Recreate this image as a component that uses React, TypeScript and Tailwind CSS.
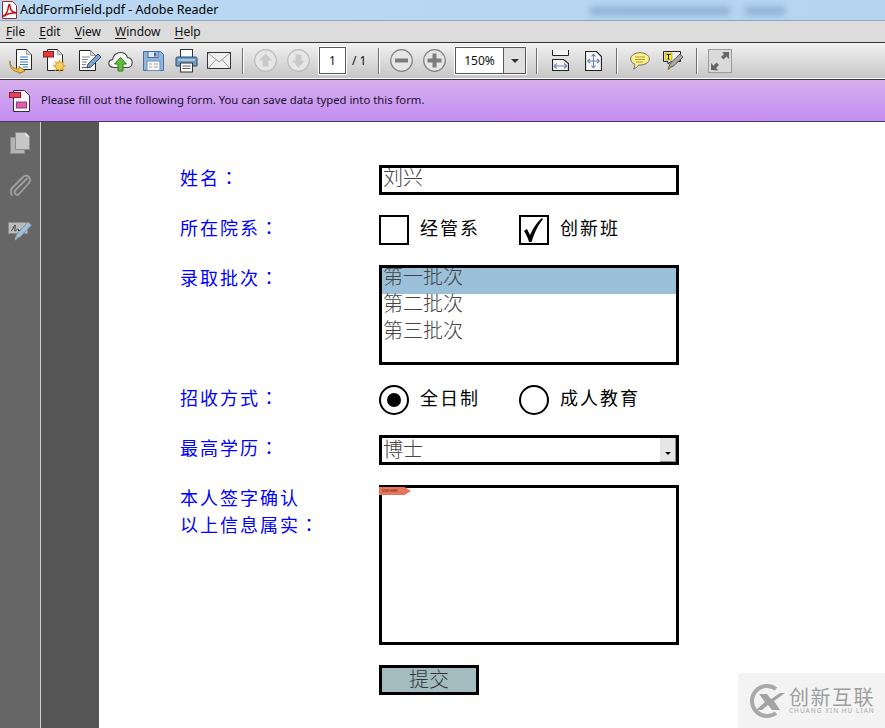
const cjk = { fontFamily: '"Noto Sans CJK SC", sans-serif' };
const ui = { fontFamily: '"Noto Sans", sans-serif' };

function Doc({ x = 6, y = 1, w = 16, h = 21 }: { x?: number; y?: number; w?: number; h?: number }) {
  const r = x + w;
  const b = y + h;
  return (
    <>
      <path d={`M${x} ${y}H${r - 5}L${r} ${y + 5}V${b}H${x}Z`} fill="#fdfdfd" stroke="#222" strokeWidth="1" />
      <path d={`M${r - 5} ${y}V${y + 5}H${r}Z`} fill="#d8d8d8" stroke="#777" strokeWidth=".6" />
    </>
  );
}

function OpenIcon() {
  return (
    <svg width="24" height="26" viewBox="0 0 24 26">
      <Doc x={7.5} y={1.5} w={15} h={20} />
      <path d="M11 9h8M11 11.5h8M11 14h8M11 16.500h8M14 19h5" stroke="#2f7fd8" strokeWidth="1.200" />
      <path d="M1 13c0 6 4 8 9 8v-3l6 5-6 2.500V24C5 24 0 20 1 13Z" fill="#f3c14e" stroke="#a9782a" strokeWidth="1" />
    </svg>
  );
}

function CreateIcon() {
  return (
    <svg width="24" height="26" viewBox="0 0 24 26">
      <Doc x={4.500} y={1.500} w={15} h={21} />
      <rect x=".5" y="3.500" width="10" height="5.500" fill="#e23b3b" stroke="#8c1f1f" />
      <path d="M16.500 11.500v13M10 18h13M12 13.500l9 9M21 13.500l-9 9" stroke="#e8aa2f" strokeWidth="1.500" />
      <circle cx="16.500" cy="18" r="4" fill="#f8cf63" stroke="#d59a2c" />
    </svg>
  );
}

function EditIcon() {
  return (
    <svg width="24" height="24" viewBox="0 0 24 24">
      <Doc x={1.500} y={1.500} w={16} h={20} />
      <path d="M4 8h8M4 10.500h6M4 13h5M4 15.500h4" stroke="#888" strokeWidth="1" />
      <path d="M9 19l1-4L20 5l3 3-10 10Z" fill="#7ea4cf" stroke="#33475f" strokeWidth="1" />
      <path d="M4 19c2-2 3 1 5-1" stroke="#333" fill="none" />
    </svg>
  );
}

function CloudIcon() {
  return (
    <svg width="25" height="24" viewBox="0 0 25 24">
      <path d="M6 18.500C2.500 18.500.8 16.500.8 14.500c0-2.200 1.700-3.700 3.700-3.900C5 6.500 8.500 3.500 12.500 3.500c3.500 0 6 2 7 5 2.800.3 4.700 2.500 4.700 5.200 0 2.700-2 4.800-5 4.800Z" fill="#f5f5f5" stroke="#444" strokeWidth="1.100" />
      <path d="M12.500 8.500l6 6.500h-3.500v7H10v-7H6.500Z" fill="#63bd3f" stroke="#2f7d1f" strokeWidth="1" />
    </svg>
  );
}

function SaveIcon() {
  return (
    <svg width="21" height="22" viewBox="0 0 21 22">
      <path d="M.5 1.500h17l3 3v16H.5Z" fill="#8fb4de" stroke="#4a6d96" />
      <rect x="5" y="1.500" width="10" height="6" fill="#dfe9f5" stroke="#4a6d96" />
      <rect x="11" y="2.500" width="2.500" height="4" fill="#4a6d96" />
      <rect x="4" y="11" width="13" height="9.500" fill="#f5f5f5" stroke="#6f8fb5" />
      <path d="M6 14h3M11 14h4M6 17h3M11 17h4" stroke="#a9a9a9" />
    </svg>
  );
}

function PrintIcon() {
  return (
    <svg width="23" height="24" viewBox="0 0 23 24">
      <rect x="5.500" y=".5" width="12" height="8" fill="#fafafa" stroke="#333" />
      <path d="M1 9.500c0-1 .7-1.500 1.500-1.500h18c.8 0 1.500.5 1.500 1.500V17H1Z" fill="#6f9cc7" stroke="#2b4a6b" />
      <rect x="3" y="10" width="17" height="2" fill="#a6c6e3" />
      <rect x="5.500" y="14" width="12" height="9" fill="#fafafa" stroke="#333" />
      <path d="M7.500 17h8M7.500 19.500h8" stroke="#666" />
    </svg>
  );
}

function MailIcon() {
  return (
    <svg width="24" height="18" viewBox="0 0 24 18">
      <rect x=".5" y=".5" width="23" height="16" fill="#f0f0f0" stroke="#333" />
      <path d="M1 1l11 9 11-9M1 16.500l8-9M23 16.500l-8-9" fill="none" stroke="#9a9a9a" />
    </svg>
  );
}

function RoundButton({ kind }: { kind: "up" | "down" | "minus" | "plus" }) {
  const color = kind === "up" || kind === "down" ? "#c9c9c9" : "#7c7c7c";
  const edge = kind === "up" || kind === "down" ? "#bcbcbc" : "#808080";
  const shape = {
    up: "M11.500 4.500l6.500 7h-3.500v6h-6v-6H5Z",
    down: "M11.500 18.500l6.500-7h-3.500v-6h-6v6H5Z",
    minus: "M5 9.500h13v4H5Z",
    plus: "M9.500 4.500h4v5h5v4h-5v5h-4v-5h-5v-4h5Z",
  }[kind];
  return (
    <svg width="23" height="23" viewBox="0 0 23 23">
      <circle cx="11.500" cy="11.500" r="10.800" fill="#e6e6e6" stroke={edge} strokeWidth="1.200" />
      <path d={shape} fill={color} />
    </svg>
  );
}

function FitWidthIcon() {
  return (
    <svg width="17" height="21" viewBox="0 0 17 21">
      <path d="M.5 0v5.500h16V0" fill="#f5f5f5" stroke="#222" />
      <path d="M.5 9.500h11l5 4v7H.5Z" fill="#f5f5f5" stroke="#222" strokeWidth="1.200" />
      <path d="M2 16h13M2 16l3-2.500M2 16l3 2.500M15 16l-3-2.500M15 16l-3 2.500" stroke="#6f86b8" strokeWidth="1.100" fill="none" />
    </svg>
  );
}

function FitPageIcon() {
  return (
    <svg width="17" height="20" viewBox="0 0 17 20">
      <path d="M.5.500h11l5 5v14H.5Z" fill="#f5f5f5" stroke="#222" strokeWidth="1.200" />
      <path d="M8.500 3v14M2.500 10h12M8.500 3L6.500 5.500M8.500 3l2 2.500M8.500 17l-2-2.500M8.500 17l2-2.500M2.500 10L5 8M2.500 10L5 12M14.500 10L12 8M14.500 10L12 12" stroke="#6f86b8" strokeWidth="1.100" fill="none" />
    </svg>
  );
}

function CommentIcon() {
  return (
    <svg width="20" height="18" viewBox="0 0 20 18">
      <path d="M10 .7c5.200 0 9.300 2.600 9.300 6.200S15.200 13 10 13H8.500C7.500 15 5.500 16.500 3.500 17c1-1.200 1.300-2.600 1.300-4.600C2.300 11.300.7 9.400.7 6.900.7 3.300 4.800.7 10 .7Z" fill="#fbf08b" stroke="#6f6f6f" strokeWidth="1" />
      <path d="M5 5h10M5 7.500h10M6 10h7" stroke="#b89b3a" strokeWidth="1" />
    </svg>
  );
}

function HighlightIcon() {
  return (
    <svg width="21" height="20" viewBox="0 0 21 20">
      <path d="M.5.500h17v10H8L5 13V10.500H.5Z" fill="#f5f5f5" stroke="#222" />
      <rect x="2" y="2" width="7" height="7" fill="#ffee00" stroke="#777" strokeWidth=".5" />
      <path d="M3.500 3.500h4M5.500 3.500v4.500M4.500 8h2" stroke="#222" strokeWidth="1" />
      <path d="M5.500 17l2-5L17 3l3 3-9.500 9Z" fill="#a8a8a8" stroke="#555" />
      <path d="M5 18.500l2.500-1.500-1.500-1.500Z" fill="#e6c83c" stroke="#8a7a20" />
    </svg>
  );
}

function ExpandIcon() {
  return (
    <svg width="24" height="24" viewBox="0 0 24 24">
      <rect x=".5" y=".5" width="23" height="23" fill="#dadada" stroke="#9a9a9a" />
      <path d="M14 3h7v7l-2.500-2.500-3 3-2.500-2.500 3-3Z" fill="#666" />
      <path d="M3 21v-7l2.500 2.500 3-3 2.500 2.500-3 3 2.500 2.500Z" fill="#666" />
    </svg>
  );
}

function PdfMark() {
  return (
    <svg width="15" height="18" viewBox="0 0 15 18">
      <path d="M.5.500h10l4 4v13H.5Z" fill="#fff" stroke="#9a2a2a" />
      <path d="M1 15c3-1 5-5 5.500-10 .2-2 1.500-2 1.500 0 0 4 2 6 6 7-3-.3-7 .2-9.500 1.500C3.500 14.500 2 16 1 15Z" fill="none" stroke="#c8141b" strokeWidth="1.500" />
    </svg>
  );
}

function PagesIcon() {
  return (
    <svg width="20" height="22" viewBox="0 0 20 22">
      <rect x=".5" y="5.500" width="14" height="16" fill="#b4b4b4" stroke="#8c8c8c" />
      <path d="M5.500.500h10l4 4v13h-14Z" fill="#c6c6c6" stroke="#8c8c8c" />
      <path d="M15.500.500v4h4Z" fill="#e6e6e6" />
    </svg>
  );
}

function ClipIcon() {
  return (
    <svg width="21" height="24" viewBox="0 0 21 24">
      <path d="M17 4.500L5.500 16c-1.500 1.500-1 3 0 4s2.500 1 3.500 0L18.500 9.500c2.500-2.500 1.500-5 .5-6.500-1.500-1.500-4-2-6 0L3 13c-3 3-2.500 6-1 8" fill="none" stroke="#a0a0a0" strokeWidth="1.800" strokeLinecap="round" />
    </svg>
  );
}

function SignIcon() {
  return (
    <svg width="24" height="20" viewBox="0 0 24 20">
      <rect x=".5" y="1.500" width="19" height="11" fill="#bbb" stroke="#8c8c8c" />
      <path d="M3 10c2-1 3-6 4-6s-1 6 0 6 2-2 3-2 0 2 1 2 1-1 2-1" fill="none" stroke="#333" strokeWidth="1" />
      <path d="M7 18l2-5L20 1l3.500 3L12 16Z" fill="#9fc2dc" stroke="#7d8f9e" />
      <path d="M7 19.500l2-1.500-1.300-1.500Z" fill="#c8c8c8" />
    </svg>
  );
}

function CheckMark() {
  return (
    <svg width="26" height="26" viewBox="0 0 26 26">
      <path d="M3 14L6 12L9 18C12 11 16 5 21 1L22 2C17 8 13 17 10.500 25H8C7 21 5 17 3 14Z" fill="#000" />
    </svg>
  );
}

function Mnemonic({ k, rest }: { k: string; rest: string }) {
  return (
    <span>
      <span className="underline underline-offset-2">{k}</span>
      {rest}
    </span>
  );
}

function Sep() {
  return <div className="w-[1px] h-[26px] bg-[#6e6e6e] border-r border-white box-content shrink-0" />;
}

function Colon() {
  return <span className="leading-[0px]" style={{ fontFamily: '"Noto Sans CJK TC", sans-serif' }}>：</span>;
}

function Label({ children }: { children: React.ReactNode }) {
  return (
    <div className="w-[199px] shrink-0 -mt-[1px] text-[18px] leading-[27px] tracking-[2px] text-[#0000ff]" style={cjk}>
      {children}
    </div>
  );
}

function Row({ children }: { children: React.ReactNode }) {
  return <div className="flex">{children}</div>;
}

function ChoiceText({ children }: { children: React.ReactNode }) {
  return <div className="pb-[6px] text-[18px] leading-[27px] tracking-[2px] text-black" style={cjk}>{children}</div>;
}

function Logo() {
  return (
    <svg width="38" height="36" viewBox="0 0 38 36">
      <path d="M28 6A15 15 0 1 0 28 30" fill="none" stroke="#a9a9a9" strokeWidth="4" />
      <path d="M11 11h8l4 5 9-6h5L26 18l6 9h-8l-4-5-6 5H8l9-8Z" fill="#a3a3a3" />
    </svg>
  );
}

export default function App() {
  return (
    <div className="relative w-full h-screen overflow-hidden flex flex-col bg-white" style={ui}>
      <div className="relative h-[21px] shrink-0 flex items-center pl-[2px] gap-[3px] bg-gradient-to-r from-[#bad8f3] to-[#b4d4f2] border-b border-[#8fa9c4] text-[12.500px] text-black">
        <PdfMark />
        <span className="leading-none">AddFormField.pdf - Adobe Reader</span>
        <div className="absolute left-[590px] top-[7px] w-[140px] h-[8px] bg-[#8fb0d2] blur-[3px]" />
        <div className="absolute left-[745px] top-[7px] w-[40px] h-[8px] bg-[#8fb0d2] blur-[3px]" />
      </div>
      <div className="h-[21px] shrink-0 flex items-center pl-[6px] gap-[14px] bg-[#dcdcdc] text-[12px] text-[#111]">
        <Mnemonic k="F" rest="ile" />
        <Mnemonic k="E" rest="dit" />
        <Mnemonic k="V" rest="iew" />
        <Mnemonic k="W" rest="indow" />
        <Mnemonic k="H" rest="elp" />
      </div>
      <div className="h-[37px] shrink-0 flex items-center border-y-[1.500px] border-t-[#333] border-b-[#fff] bg-gradient-to-b from-[#f2f2f2] to-[#c6c6c6]">
        <div className="ml-[9px]"><OpenIcon /></div>
        <div className="ml-[10px]"><CreateIcon /></div>
        <div className="ml-[11px]"><EditIcon /></div>
        <div className="ml-[6px]"><CloudIcon /></div>
        <div className="ml-[10px]"><SaveIcon /></div>
        <div className="ml-[11px]"><PrintIcon /></div>
        <div className="ml-[9px]"><MailIcon /></div>
        <div className="ml-[11px]"><Sep /></div>
        <div className="ml-[10px]"><RoundButton kind="up" /></div>
        <div className="ml-[10px]"><RoundButton kind="down" /></div>
        <div className="ml-[9px] w-[27px] h-[27px] bg-white border border-[#555] outline outline-1 outline-white flex items-center justify-center text-[12px] text-[#111]">1</div>
        <div className="ml-[6px] w-[18px] text-[12px] text-[#111] whitespace-nowrap">/ 1</div>
        <div className="ml-[8px]"><Sep /></div>
        <div className="ml-[10px]"><RoundButton kind="minus" /></div>
        <div className="ml-[10px]"><RoundButton kind="plus" /></div>
        <div className="ml-[9px] w-[71px] h-[27px] flex bg-white border border-[#555] outline outline-1 outline-white text-[12px] text-[#111]">
          <div className="w-[48px] border-r border-[#555] flex items-center justify-center">150%</div>
          <div className="flex-1 bg-[#e0e0e0] flex items-center justify-center">
            <div className="w-0 h-0 border-x-[4px] border-x-transparent border-t-[4px] border-t-[#333]" />
          </div>
        </div>
        <div className="ml-[10px]"><Sep /></div>
        <div className="ml-[14px]"><FitWidthIcon /></div>
        <div className="ml-[16px]"><FitPageIcon /></div>
        <div className="ml-[14px]"><Sep /></div>
        <div className="ml-[12px]"><CommentIcon /></div>
        <div className="ml-[13px]"><HighlightIcon /></div>
        <div className="ml-[12px]"><Sep /></div>
        <div className="ml-[10px]"><ExpandIcon /></div>
      </div>
      <div className="h-[43px] shrink-0 flex items-center pl-[9px] gap-[9px] border-y border-t-[#3c3250] border-b-[#4a3a66] bg-gradient-to-b from-[#d6aeea] to-[#c48ef3] text-[11.300px] text-[#1a1030]">
        <svg width="23" height="24" viewBox="0 0 23 24">
          <path d="M4.500 1.500h11l5 5v16h-16Z" fill="#fdf4fa" stroke="#3a2a40" />
          <rect x=".5" y="3.500" width="11" height="5" fill="#e8435a" stroke="#8a1f30" />
          <rect x="7.500" y="13" width="10" height="6" fill="#d760a8" stroke="#93407a" />
        </svg>
        <span>Please fill out the following form. You can save data typed into this form.</span>
      </div>
      <div className="flex-1 flex min-h-0">
        <div className="w-[40px] shrink-0 bg-[#666666] flex flex-col items-center pt-[10px] gap-[20px]">
          <PagesIcon />
          <ClipIcon />
          <div className="mt-[3px]"><SignIcon /></div>
        </div>
        <div className="w-[1px] shrink-0 bg-[#d0d0d0]" />
        <div className="w-[58px] shrink-0 bg-[#555555]" />
        <div className="flex-1 min-w-0 pl-[81px] pt-[43px] flex flex-col gap-[20px]">
          <Row>
            <Label>姓名<Colon /></Label>
            <div className="w-[300px] h-[30px] border-[3px] border-black pl-[1px] text-[20px] leading-[18px] text-[#444] font-light" style={cjk}>刘兴</div>
          </Row>
          <Row>
            <Label>所在院系<Colon /></Label>
            <div className="h-[30px] flex items-center">
              <div className="w-[30px] h-[30px] border-2 border-black" />
              <div className="ml-[11px] w-[99px]"><ChoiceText>经管系</ChoiceText></div>
              <div className="w-[30px] h-[30px] border-2 border-black"><CheckMark /></div>
              <div className="ml-[11px]"><ChoiceText>创新班</ChoiceText></div>
            </div>
          </Row>
          <Row>
            <Label>录取批次<Colon /></Label>
            <div className="w-[300px] h-[100px] border-[3px] border-black overflow-hidden text-[20px] text-[#444] font-light" style={cjk}>
              <div className="h-[26px] bg-[#9bc0d9] pl-[1px] leading-[16px]">第一批次</div>
              <div className="pl-[1px] leading-[27px] -mt-[5px]">第二批次</div>
              <div className="pl-[1px] leading-[27px]">第三批次</div>
            </div>
          </Row>
          <Row>
            <Label>招收方式<Colon /></Label>
            <div className="h-[30px] flex items-center">
              <div className="w-[30px] h-[30px] rounded-full border-2 border-black flex items-center justify-center">
                <div className="w-[14px] h-[14px] rounded-full bg-black" />
              </div>
              <div className="ml-[11px] w-[99px]"><ChoiceText>全日制</ChoiceText></div>
              <div className="w-[30px] h-[30px] rounded-full border-2 border-black" />
              <div className="ml-[11px]"><ChoiceText>成人教育</ChoiceText></div>
            </div>
          </Row>
          <Row>
            <Label>最高学历<Colon /></Label>
            <div className="w-[300px] h-[30px] border-[3px] border-black flex">
              <div className="flex-1 pl-[1px] text-[20px] leading-[22px] text-[#444] font-light" style={cjk}>博士</div>
              <div className="w-[16px] bg-[#e6e6e6] border-r border-b border-[#8a8a8a] flex items-end justify-center pb-[6px]">
                <div className="w-0 h-0 border-x-[3px] border-x-transparent border-t-[3px] border-t-black" />
              </div>
            </div>
          </Row>
          <Row>
            <Label>
              <div>本人签字确认</div>
              <div>以上信息属实<Colon /></div>
            </Label>
            <div className="relative w-[300px] h-[160px] border-[3px] border-black">
              <div className="absolute -left-[3px] -top-[1px] w-[32px] h-[8px] bg-[#e9735c] flex items-center pl-[3px] text-[3px] leading-none text-[#5a1a10] [clip-path:polygon(0_0,80%_0,100%_50%,80%_100%,0_100%)]" style={ui}>SIGN HERE</div>
            </div>
          </Row>
          <Row>
            <div className="w-[199px] shrink-0" />
            <div className="w-[100px] h-[30px] border-[3px] border-black bg-[#a3bcc0] flex items-center justify-center pb-[3px] text-[20px] leading-none text-[#333] font-light" style={cjk}>提交</div>
          </Row>
        </div>
      </div>
      <div className="absolute right-0 bottom-0 w-[147px] h-[55px] bg-[#f3f3f3] flex items-center pl-[10px] gap-[3px]">
        <Logo />
        <div className="flex flex-col items-start">
          <div className="text-[20px] leading-[21px] text-[#9e9e9e] tracking-[1.500px]" style={cjk}>创新互联</div>
          <div className="text-[6.500px] leading-[8px] text-[#a8a8a8] tracking-[1px] whitespace-nowrap" style={ui}>CHUANG XIN HU LIAN</div>
        </div>
      </div>
    </div>
  );
}
